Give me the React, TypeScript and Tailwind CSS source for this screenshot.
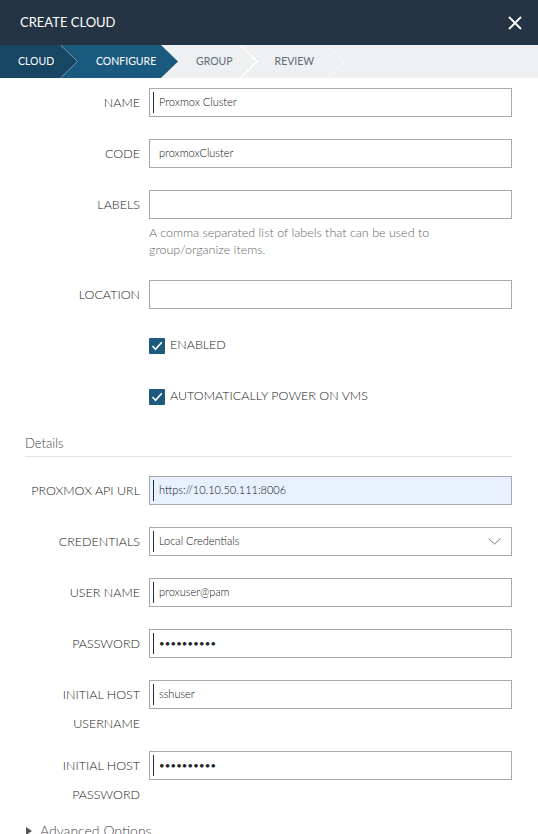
import React from "react";

const FONT = { fontFamily: "Lato, 'Noto Sans', sans-serif" };

function Cursor() {
  return <span className="mr-[5px] h-[21px] w-px shrink-0 bg-[#1f2d3d]" />;
}

function Field({
  label,
  value,
  cursor,
  password,
  bg,
  select,
  multi,
  help,
}: {
  label: React.ReactNode;
  value?: string;
  cursor?: boolean;
  password?: boolean;
  bg?: boolean;
  select?: boolean;
  multi?: boolean;
  help?: string;
}) {
  return (
    <div className={"flex items-start gap-[9px] " + (multi ? "mb-[13px]" : "mb-[22px]")}>
      <div className="w-[115px] shrink-0 whitespace-nowrap text-right text-[12.5px] font-light leading-[29px] text-[#222]">
        {label}
      </div>
      <div className="flex-1">
        <div
          className={
            "flex h-[29px] items-center border border-[#a9a9a9] " +
            (bg ? "bg-[#e8f0fe] " : "bg-white ") +
            (cursor ? "pl-[3px] " : "pl-[9px] ") +
            "pr-[8px]"
          }
        >
          {cursor && <Cursor />}
          {password ? (
            <span className="text-[9.5px] leading-none tracking-[0.2px] text-[#222]">••••••••••</span>
          ) : (
            <span className="text-[11px] font-light text-[#111]">{value}</span>
          )}
          {select && (
            <svg className="ml-auto mr-[2px]" width="13" height="7" viewBox="0 0 13 7">
              <polyline points="0.5,0.5 6.5,6 12.5,0.5" fill="none" stroke="#777" strokeWidth="1" />
            </svg>
          )}
        </div>
        {help && (
          <div className="mt-[5px] pr-[50px] text-[12.5px] font-light leading-[17px] text-[#666]">{help}</div>
        )}
      </div>
    </div>
  );
}

function Check({ label }: { label: string }) {
  return (
    <div className="mb-[22px] flex h-[29px] items-center pl-[124px]">
      <div className="flex h-[16px] w-[16px] items-center justify-center rounded-[1px] bg-[#1d5a7e]">
        <svg width="12" height="10" viewBox="0 0 12 10">
          <polyline points="1.5,5 4.5,8.3 10.8,1.3" fill="none" stroke="#fff" strokeWidth="1.6" />
        </svg>
      </div>
      <span className="ml-[5px] text-[12.5px] font-light text-[#222]">{label}</span>
    </div>
  );
}

export default function App() {
  return (
    <div className="h-[834px] w-[538px] overflow-hidden bg-white" style={FONT}>
      {/* Header */}
      <div className="flex h-[45px] items-center justify-between bg-[#253445] pl-[20px] pr-[16px]">
        <span className="text-[13px] text-white">CREATE CLOUD</span>
        <svg width="14" height="14" viewBox="0 0 14 14">
          <path d="M1 1L13 13M13 1L1 13" stroke="#fff" strokeWidth="1.8" />
        </svg>
      </div>

      {/* Breadcrumb */}
      <div className="relative flex h-[33px] items-center bg-[#eef0f2] text-[10.5px]">
        <div className="relative z-20 flex h-full w-[78px] items-center bg-[#174663] pl-[18px] text-white [clip-path:polygon(0_0,61px_0,78px_50%,61px_100%,0_100%)]">
          CLOUD
        </div>
        <div className="relative z-10 -ml-[17px] flex h-full w-[117px] items-center bg-[#1b5a7f] pl-[35px] text-white [clip-path:polygon(0_0,100px_0,117px_50%,100px_100%,0_100%)]">
          CONFIGURE
        </div>
        <svg className="absolute left-[60px] top-0 z-30" width="19" height="33" viewBox="0 0 19 33">
          <polyline points="0.5,0 17.5,16.5 0.5,33" fill="none" stroke="#7d9bb1" strokeWidth="1" />
        </svg>
        <span className="ml-[18px] text-[#5f6a75]">GROUP</span>
        <svg className="ml-[7px]" width="18" height="33" viewBox="0 0 18 33">
          <polyline points="0.5,0 17,16.5 0.5,33" fill="none" stroke="#ffffff" strokeWidth="1.5" />
        </svg>
        <span className="ml-[17px] text-[#5f6a75]">REVIEW</span>
        <svg className="ml-[13px]" width="18" height="33" viewBox="0 0 18 33">
          <polyline points="0.5,0 17,16.5 0.5,33" fill="none" stroke="#fafbfc" strokeWidth="1" />
        </svg>
      </div>

      {/* Form */}
      <div className="pl-[25px] pr-[26px] pt-[10px]">
        <Field label="NAME" value="Proxmox Cluster" cursor />
        <Field label="CODE" value="proxmoxCluster" />
        <Field
          label="LABELS"
          value=""
          help="A comma separated list of labels that can be used to group/organize items."
        />
        <Field label="LOCATION" value="" />
        <Check label="ENABLED" />
        <Check label="AUTOMATICALLY POWER ON VMS" />

        <div className="mb-[19px] mt-[2px] border-b border-[#e3e3e3] pb-[3px] text-[13px] font-light leading-[20px] text-[#444]">
          Details
        </div>

        <Field label="PROXMOX API URL" value="https://10.10.50.111:8006" cursor bg />
        <Field label="CREDENTIALS" value="Local Credentials" cursor select />
        <Field label="USER NAME" value="proxuser@pam" cursor />
        <Field label="PASSWORD" password cursor />
        <Field
          label={
            <>
              INITIAL HOST
              <br />
              USERNAME
            </>
          }
          value="sshuser"
          cursor
          multi
        />
        <Field
          label={
            <>
              INITIAL HOST
              <br />
              PASSWORD
            </>
          }
          password
          cursor
          multi
        />
        <div className="mt-[1px] flex items-center pl-[1px] text-[14px] font-light leading-[18px] text-[#444]">
          <svg width="6" height="8" viewBox="0 0 6 8">
            <polygon points="0,0 6,4 0,8" fill="#555" />
          </svg>
          <span className="ml-[8px]">Advanced Options</span>
        </div>
      </div>
    </div>
  );
}
